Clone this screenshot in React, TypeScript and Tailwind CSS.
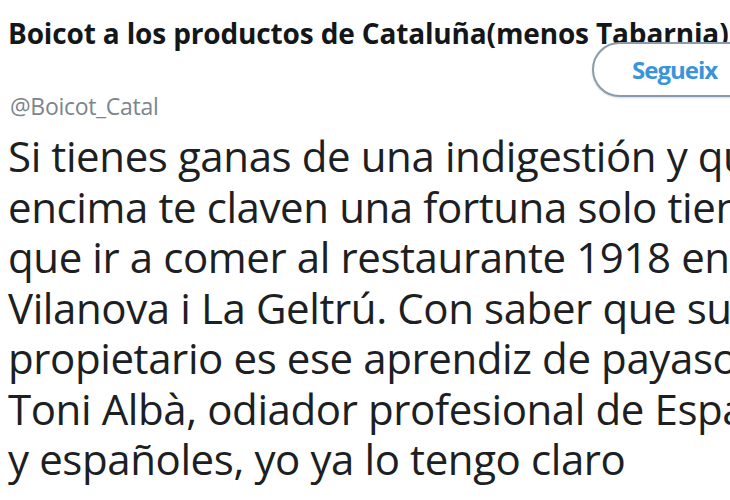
const BODY_LINES = [
  'Si tienes ganas de una indigestión y que',
  'encima te claven una fortuna solo tienes',
  'que ir a comer al restaurante 1918 en',
  'Vilanova i La Geltrú. Con saber que su',
  'propietario es ese aprendiz de payaso',
  'Toni Albà, odiador profesional de España',
  'y españoles, yo ya lo tengo claro',
]

export default function App() {
  return (
    <div
      className="relative w-[730px] h-[500px] overflow-hidden bg-white"
      style={{ fontFamily: '"Open Sans", "Noto Sans", sans-serif' }}
    >
      {/* header */}
      <div className="pl-2 pt-[17px]">
        <p className="whitespace-nowrap text-[28px] leading-[32px] font-bold text-[#14171a] tracking-[-0.15px]">
          Boicot a los productos de Cataluña(menos Tabarnia)
        </p>
        <p className="mt-[43px] pl-[2px] whitespace-nowrap text-[23px] leading-[28px] text-[#7c858d] tracking-[-0.3px]">
          @Boicot_Catal
        </p>
      </div>

      {/* follow button */}
      <button
        type="button"
        className="absolute left-[592px] top-[42px] h-[55px] w-[180px] rounded-full border-2 border-[#8a9cab] bg-white pl-[38px] text-left shadow-[0_1px_2px_rgba(0,0,0,0.15)]"
      >
        <span className="text-[24px] font-bold text-[#3b94d9] tracking-[-1px]">Segueix</span>
      </button>

      {/* tweet body */}
      <div className="pl-2 pt-[11px]">
        {BODY_LINES.map((line) => (
          <p key={line} className="whitespace-nowrap text-[42px] leading-[50.5px] text-[#1c2022] tracking-[-0.4px]">
            {line}
          </p>
        ))}
      </div>
    </div>
  )
}
